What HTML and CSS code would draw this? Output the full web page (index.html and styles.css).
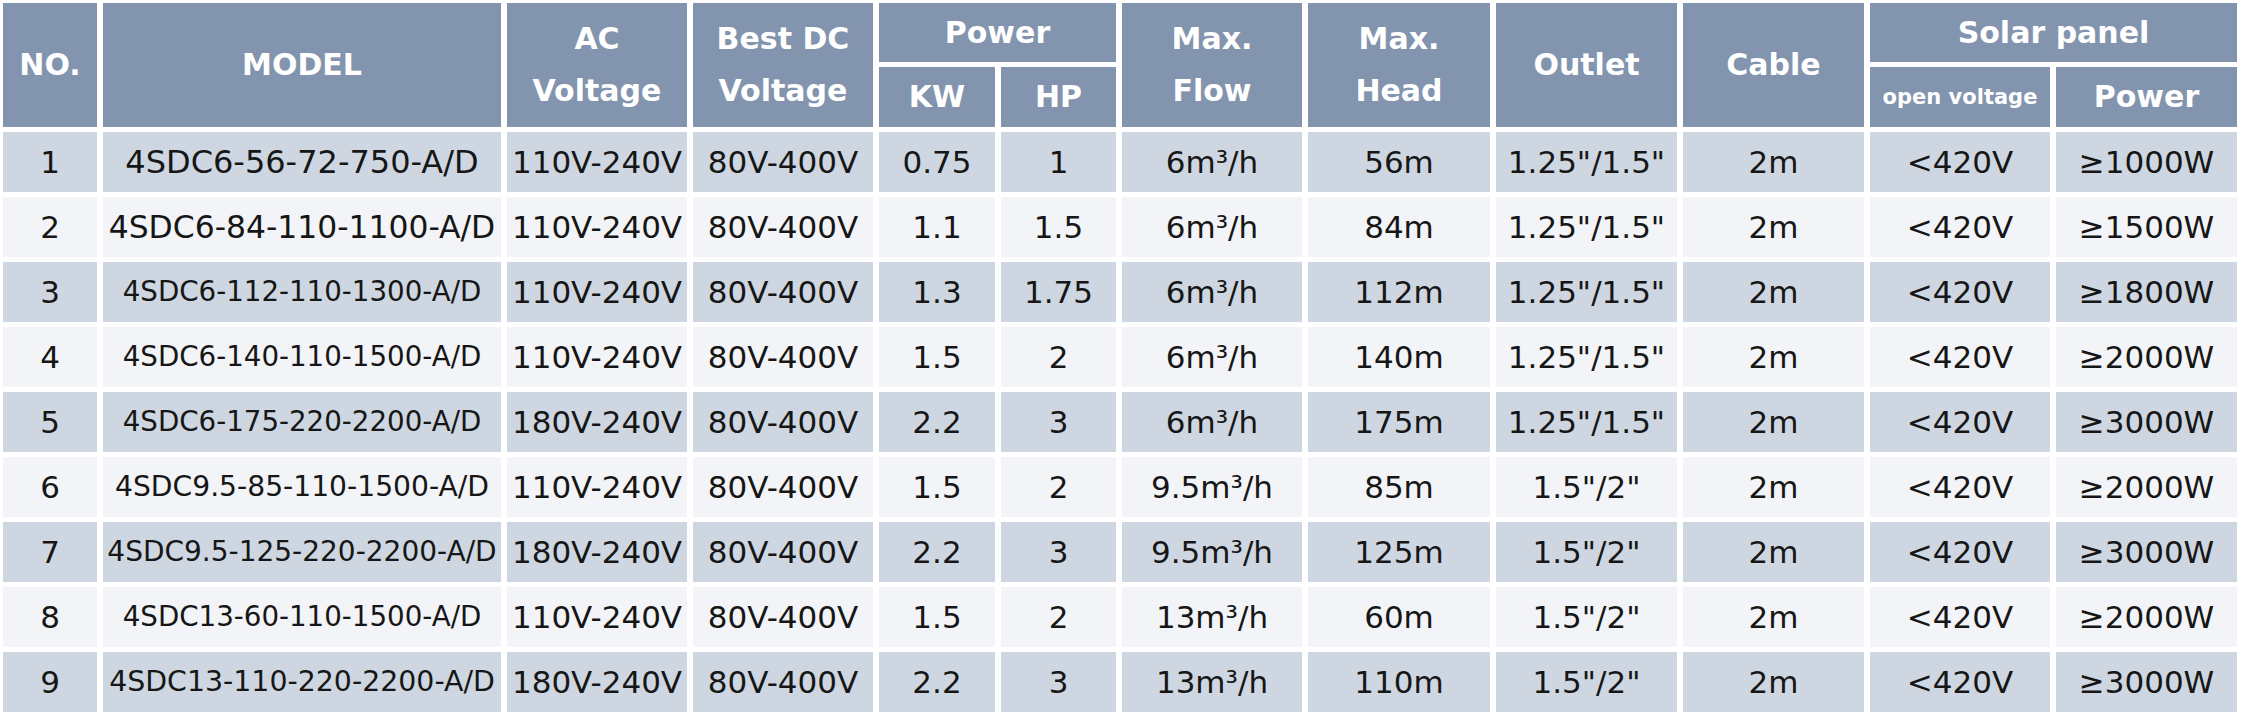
FILE: index.html
```html
<!DOCTYPE html>
<html>
<head>
<meta charset="utf-8">
<link rel="stylesheet" href="styles.css">
</head>
<body>
<table class="spec">
  <colgroup>
    <col class="c-no"><col class="c-model"><col class="c-ac"><col class="c-dc">
    <col class="c-kw"><col class="c-hp"><col class="c-flow"><col class="c-head">
    <col class="c-outlet"><col class="c-cable"><col class="c-ov"><col class="c-pw">
  </colgroup>
  <thead>
    <tr class="h1">
      <th rowspan="2">NO.</th>
      <th rowspan="2">MODEL</th>
      <th rowspan="2" class="two">AC<br>Voltage</th>
      <th rowspan="2" class="two">Best DC<br>Voltage</th>
      <th colspan="2">Power</th>
      <th rowspan="2" class="two">Max.<br>Flow</th>
      <th rowspan="2" class="two">Max.<br>Head</th>
      <th rowspan="2">Outlet</th>
      <th rowspan="2">Cable</th>
      <th colspan="2">Solar panel</th>
    </tr>
    <tr class="h2">
      <th>KW</th>
      <th>HP</th>
      <th class="small">open voltage</th>
      <th>Power</th>
    </tr>
  </thead>
  <tbody>
    <tr class="odd"><td>1</td><td class="model s1">4SDC6-56-72-750-A/D</td><td>110V-240V</td><td>80V-400V</td><td>0.75</td><td>1</td><td>6m³/h</td><td>56m</td><td>1.25"/1.5"</td><td>2m</td><td>&lt;420V</td><td>≥1000W</td></tr>
    <tr class="even"><td>2</td><td class="model s2">4SDC6-84-110-1100-A/D</td><td>110V-240V</td><td>80V-400V</td><td>1.1</td><td>1.5</td><td>6m³/h</td><td>84m</td><td>1.25"/1.5"</td><td>2m</td><td>&lt;420V</td><td>≥1500W</td></tr>
    <tr class="odd"><td>3</td><td class="model s3">4SDC6-112-110-1300-A/D</td><td>110V-240V</td><td>80V-400V</td><td>1.3</td><td>1.75</td><td>6m³/h</td><td>112m</td><td>1.25"/1.5"</td><td>2m</td><td>&lt;420V</td><td>≥1800W</td></tr>
    <tr class="even"><td>4</td><td class="model s3">4SDC6-140-110-1500-A/D</td><td>110V-240V</td><td>80V-400V</td><td>1.5</td><td>2</td><td>6m³/h</td><td>140m</td><td>1.25"/1.5"</td><td>2m</td><td>&lt;420V</td><td>≥2000W</td></tr>
    <tr class="odd"><td>5</td><td class="model s3">4SDC6-175-220-2200-A/D</td><td>180V-240V</td><td>80V-400V</td><td>2.2</td><td>3</td><td>6m³/h</td><td>175m</td><td>1.25"/1.5"</td><td>2m</td><td>&lt;420V</td><td>≥3000W</td></tr>
    <tr class="even"><td>6</td><td class="model s4">4SDC9.5-85-110-1500-A/D</td><td>110V-240V</td><td>80V-400V</td><td>1.5</td><td>2</td><td>9.5m³/h</td><td>85m</td><td>1.5"/2"</td><td>2m</td><td>&lt;420V</td><td>≥2000W</td></tr>
    <tr class="odd"><td>7</td><td class="model s6">4SDC9.5-125-220-2200-A/D</td><td>180V-240V</td><td>80V-400V</td><td>2.2</td><td>3</td><td>9.5m³/h</td><td>125m</td><td>1.5"/2"</td><td>2m</td><td>&lt;420V</td><td>≥3000W</td></tr>
    <tr class="even"><td>8</td><td class="model s3">4SDC13-60-110-1500-A/D</td><td>110V-240V</td><td>80V-400V</td><td>1.5</td><td>2</td><td>13m³/h</td><td>60m</td><td>1.5"/2"</td><td>2m</td><td>&lt;420V</td><td>≥2000W</td></tr>
    <tr class="odd"><td>9</td><td class="model s5">4SDC13-110-220-2200-A/D</td><td>180V-240V</td><td>80V-400V</td><td>2.2</td><td>3</td><td>13m³/h</td><td>110m</td><td>1.5"/2"</td><td>2m</td><td>&lt;420V</td><td>≥3000W</td></tr>
  </tbody>
</table>
</body>
</html>
```

FILE: styles.css
```css
html, body {
  margin: 0;
  padding: 0;
  background: #ffffff;
}

body {
  font-family: "DejaVu Sans", "Liberation Sans", sans-serif;
  color: #161616;
}

.spec {
  table-layout: fixed;
  border-collapse: separate;
  border-spacing: 6px 5px;
  margin: -2px 0 0 -3px;
  width: 2246px;
}

.c-no { width: 94px; }
.c-model { width: 398px; }
.c-ac { width: 180px; }
.c-dc { width: 180px; }
.c-kw { width: 116px; }
.c-hp { width: 115px; }
.c-flow { width: 180px; }
.c-head { width: 182px; }
.c-outlet { width: 181px; }
.c-cable { width: 181px; }
.c-ov { width: 180px; }
.c-pw { width: 181px; }

.spec th {
  background: #8394ae;
  color: #ffffff;
  font-weight: bold;
  font-size: 30px;
  line-height: 36px;
  padding: 0;
  text-align: center;
  vertical-align: middle;
  white-space: nowrap;
}

.spec .h1 th { height: 59px; }
.spec .h2 th { height: 60px; }

.spec th.two { line-height: 52px; }

.spec th.small {
  font-size: 21px;
}

.spec td {
  height: 60px;
  padding: 0;
  font-size: 31px;
  line-height: 36px;
  text-align: center;
  vertical-align: middle;
  white-space: nowrap;
  overflow: hidden;
}

.spec tr.odd td { background: #ced7e1; }
.spec tr.even td { background: #f2f4f7; }

.spec td.s1 { font-size: 32px; }
.spec td.s2 { font-size: 31.4px; }
.spec td.s3 { font-size: 27.7px; }
.spec td.s4 { font-size: 28.2px; }
.spec td.s5 { font-size: 28.4px; }
.spec td.s6 { font-size: 28px; }
```
